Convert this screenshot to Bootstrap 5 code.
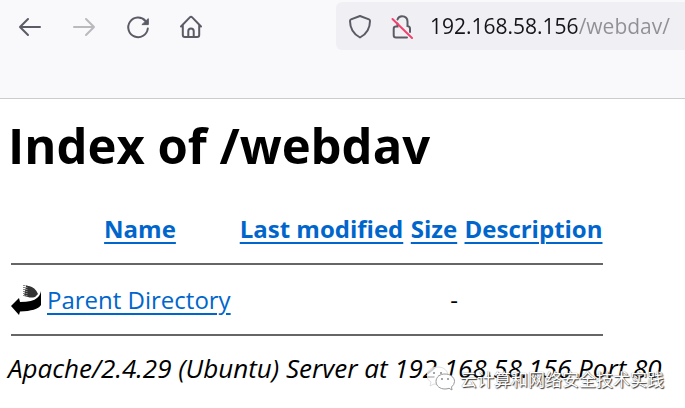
<!DOCTYPE html>
<html lang="en">
<head>
<meta charset="utf-8">
<meta name="viewport" content="width=device-width, initial-scale=1">
<title>Index of /webdav</title>
<link href="https://cdn.jsdelivr.net/npm/bootstrap@5.3.0/dist/css/bootstrap.min.css" rel="stylesheet">
<style>
body{font-family:"Segoe UI","Open Sans",sans-serif;font-size:24px;line-height:36px;color:#000;background:#fff;overflow-x:hidden}
.browser-bar{background:#f9f9fb;border-bottom:1px solid #ccc;padding:2px 0 48px 14px}
.tool{width:32px;height:32px;margin-right:22px;color:#5b5b66}
.tool:disabled{color:#b9b9be;opacity:1;border:0}
.address{background:#f0f0f4;height:48px;margin-left:128px;padding-left:8px;border-radius:6px 0 0 6px}
.address .tool{margin-right:10px}
.url{font-size:21px;line-height:32px;margin-left:2px;border:0;padding:0;outline:0;min-width:0;color:transparent;background:linear-gradient(90deg,#15141a 149px,#8f8f94 149px);-webkit-background-clip:text;background-clip:text}
.listing-page{padding:14px 7px 0 8px}
.page-title{font-size:49px;line-height:64px;font-weight:700;margin:0 0 34px}
.listing{table-layout:fixed;width:598px;margin-bottom:14px}
.listing th,.listing td{padding:0 3px;white-space:nowrap}
.listing th{text-align:center}
.listing a{color:#06c;text-decoration-thickness:2px;text-underline-offset:4px}
.listing hr{margin:16px 0 17px;border:0;height:2px;background:#666;opacity:1}
.col-icon{width:36px}.col-file{width:192px}.col-date{width:171px}.col-size{width:54px}.col-desc{width:145px}
.server{font-style:italic;font-size:26px;margin:0;white-space:nowrap}
.credit{position:absolute;left:427px;top:366px;gap:5px;font:17px/24px "Noto Sans CJK SC",sans-serif;color:#fff;text-shadow:1px 1px 1px #333,0 0 1px #777}
</style>
<script src="https://cdn.jsdelivr.net/npm/bootstrap@5.3.0/dist/js/bootstrap.bundle.min.js"></script>
</head>
<body>
<header class="browser-bar">
<nav class="d-flex align-items-center" aria-label="Browser">
<button class="tool btn p-0 border-0 d-flex flex-shrink-0" aria-label="Back"><svg width="32" height="32" fill="none" stroke="currentColor" stroke-width="2" stroke-linecap="round" stroke-linejoin="round"><path d="M26 17H6M14 9l-8 8 8 8"/></svg></button>
<button class="tool btn p-0 border-0 d-flex flex-shrink-0" aria-label="Forward" disabled><svg width="32" height="32" fill="none" stroke="currentColor" stroke-width="2" stroke-linecap="round" stroke-linejoin="round"><path d="M6 17h20M18 9l8 8-8 8"/></svg></button>
<button class="tool btn p-0 border-0 d-flex flex-shrink-0" aria-label="Reload"><svg width="32" height="32" fill="none" stroke="currentColor" stroke-width="2" stroke-linecap="round"><path d="M23.5 11A9.8 9.8 0 1 0 25.8 18.5"/><path d="M26.3 9v5.6h-6z" fill="currentColor" stroke-width="1" stroke-linejoin="round"/></svg></button>
<button class="tool btn p-0 border-0 d-flex flex-shrink-0 me-0" aria-label="Home"><svg width="32" height="32" fill="none" stroke="currentColor" stroke-width="2" stroke-linecap="round" stroke-linejoin="round"><path d="M5 16.5 13.8 7.4q1.2-1.2 2.4 0L25 16.5M6.8 15v10q0 2 2 2h12.4q2 0 2-2V15M12.3 27v-6q0-2.5 2.7-2.5t2.7 2.5v6"/></svg></button>
<div class="address d-flex align-items-center flex-grow-1">
<button class="tool btn p-0 border-0 d-flex flex-shrink-0" aria-label="Tracking protection"><svg width="32" height="32" fill="none" stroke="currentColor" stroke-width="2" stroke-linejoin="round"><path d="M16 6 25 9.400q1 .4 1 1.5C26 18.500 22.300 24 16 27.500 9.700 24 6 18.500 6 10.900q0-1.100 1-1.500z"/></svg></button>
<button class="tool btn p-0 border-0 d-flex flex-shrink-0" aria-label="Connection not secure"><svg width="32" height="32" fill="none" stroke="currentColor" stroke-width="2" stroke-linecap="round"><path d="M11.500 9.500Q12.500 6.200 16 6.200q5.500 0 5.500 5.500V16q2.500.3 2.500 2.800V22M21 27.500H10q-2.300 0-2.300-2.300v-6.500q0-2.300 2.300-2.300h1.500v-3"/><path stroke="#f2416e" d="m6.500 9 19.500 19"/></svg></button>
<input class="url flex-grow-1" type="text" aria-label="Address" value="192.168.58.156/webdav/" spellcheck="false">
</div>
</nav>
</header>
<main class="listing-page">
<h1 class="page-title">Index of /webdav</h1>
<table class="listing">
<colgroup><col class="col-icon"><col class="col-file"><col class="col-date"><col class="col-size"><col class="col-desc"></colgroup>
<thead>
<tr><th></th><th scope="col"><a href="#">Name</a></th><th scope="col"><a href="#">Last modified</a></th><th scope="col"><a href="#">Size</a></th><th scope="col"><a href="#">Description</a></th></tr>
<tr><td colspan="5"><hr></td></tr>
</thead>
<tbody>
<tr><td><svg class="d-block" width="31" height="32" role="img" aria-label="Parent"><path fill="#333" d="M15 2h3q6 1 9 8l-3 3q-4 1-7 0l-4-1z"/><path stroke="#888" stroke-width="2" stroke-dasharray="1 1" d="M13 1v12M15.500 1v11"/><path fill="#000" d="M0 22 8 14l1 4q13 0 17-4 3-2 4-7v14q-4 6-21 6.500L8 31z"/></svg></td><td><a href="#">Parent Directory</a></td><td></td><td class="text-end">-</td><td></td></tr>
<tr><td colspan="5"><hr class="mb-0"></td></tr>
</tbody>
</table>
<address class="server">Apache/2.4.29 (Ubuntu) Server at 192.168.58.156 Port 80</address>
</main>
<div class="credit d-flex align-items-center text-nowrap">
<svg width="28" height="26" fill="#fff" stroke="#999" stroke-width="1" aria-hidden="true"><path d="M11 1C4 1 0 5 0 9.500c0 3 1.500 5 4 6.500l-1 4 4-2q3 1 6 0c5-1 8-4 8-8.500S17 1 11 1z" stroke="#ddd" fill-opacity=".8"/><path d="M18 8c-5 0-9 3-9 7.500S13 23 18 23q2 0 4-.7l3 1.700-.5-3q3-2.500 3-5.500C27.500 11 23 8 18 8z"/><g fill="#888" stroke="none"><circle cx="7" cy="7" r="1"/><circle cx="14" cy="7" r="1"/><circle cx="15" cy="13" r="1"/><circle cx="21" cy="13" r="1"/></g></svg>
<span lang="zh">云计算和网络安全技术实践</span>
</div>
</body>
</html>
